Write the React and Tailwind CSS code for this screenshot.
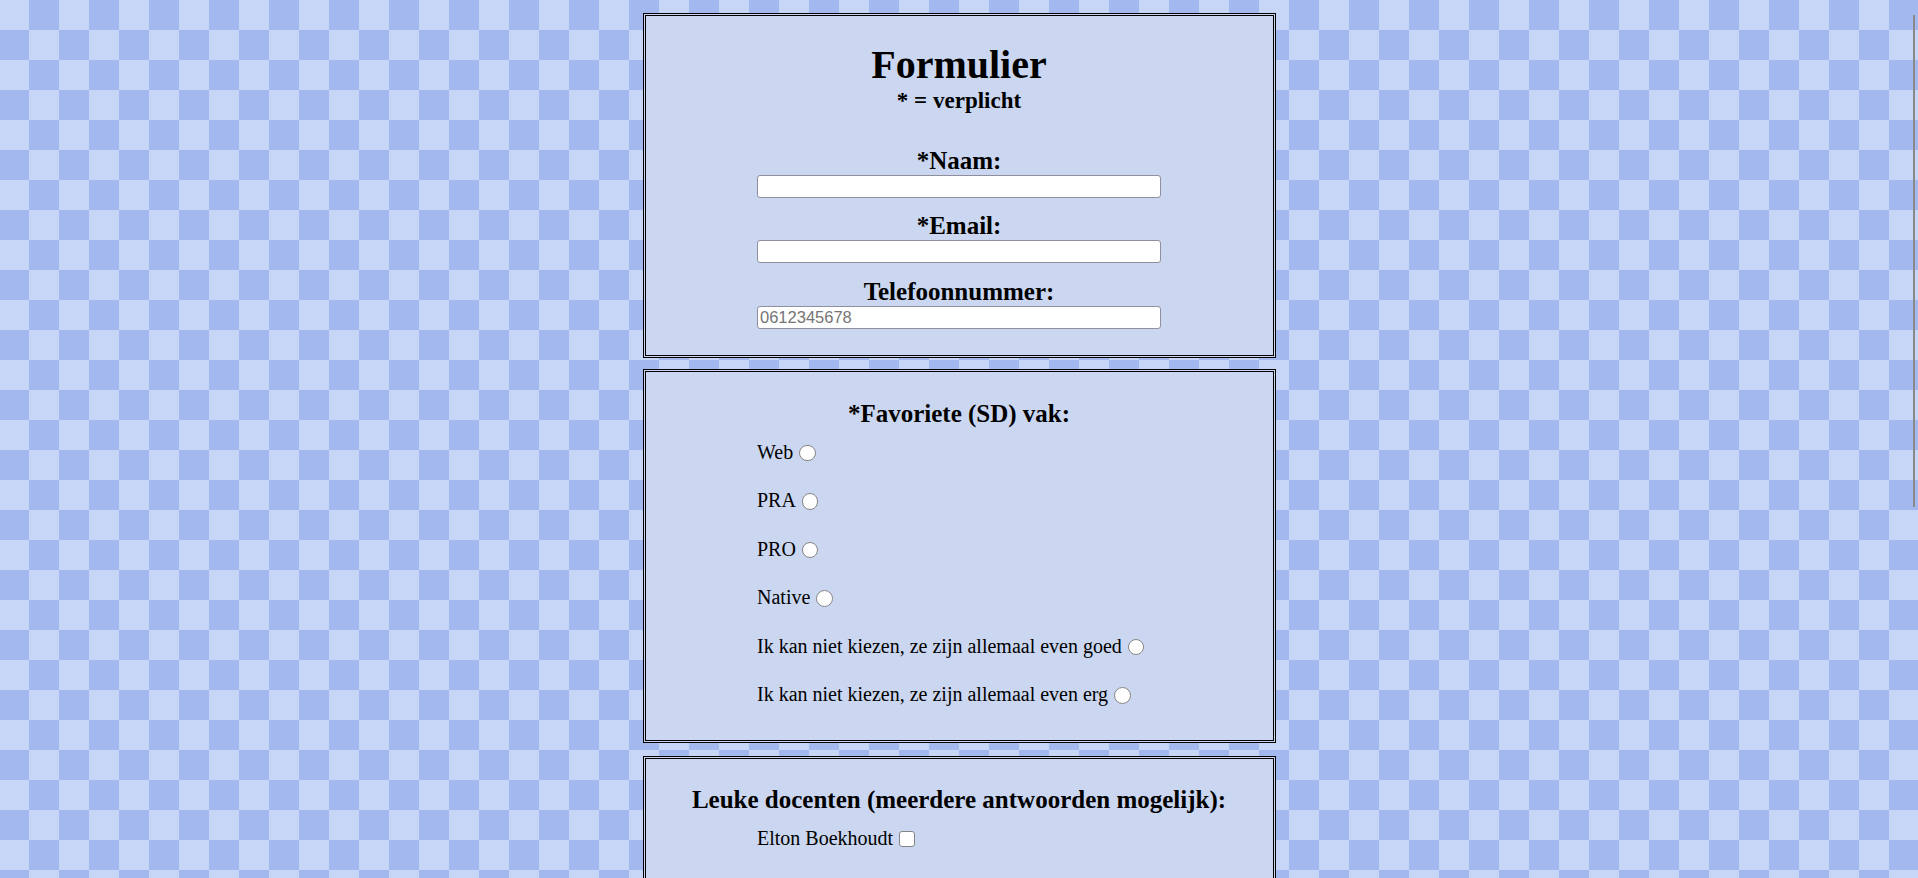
const vakken = [
  "Web",
  "PRA",
  "PRO",
  "Native",
  "Ik kan niet kiezen, ze zijn allemaal even goed",
  "Ik kan niet kiezen, ze zijn allemaal even erg",
];

const docenten = ["Elton Boekhoudt", "Marieke van der Veenendaal"];

function Field({ label, placeholder, className, inputClass }) {
  return (
    <>
      <label className={`text-[25px] font-bold leading-[29px] ${className}`}>
        {label}
      </label>
      <input
        type="text"
        placeholder={placeholder}
        className={`h-[23.5px] w-[404px] rounded-[3px] border border-[#8f8f9d] bg-white px-[2px] font-['Liberation_Sans',sans-serif] text-[16.5px] text-black outline-none placeholder:text-[#757575] ${inputClass}`}
      />
    </>
  );
}

export default function App() {
  return (
    <div className="relative h-screen overflow-hidden bg-[image:conic-gradient(#a2b8ef_25%,#c7d6f7_0_50%,#a2b8ef_0_75%,#c7d6f7_0)] bg-[length:60px_60px] bg-[position:-1px_0] pt-[13px] font-['Liberation_Serif',serif] text-black">
      {/* persoonsgegevens */}
      <div className="mx-auto flex w-[633px] flex-col items-center border-[3px] border-double border-black bg-[#cbd7f0] pt-[26px] pb-[25.5px]">
        <h1 className="text-[40px] font-bold leading-[45px]">Formulier</h1>
        <p className="mt-[1.2px] text-[23px] font-bold leading-[26px]">
          * = verplicht
        </p>
        <Field label="*Naam:" className="mt-[32.3px]" inputClass="-mt-[0.5px]" />
        <Field label="*Email:" className="mt-[12.9px]" inputClass="-mt-[0.4px]" />
        <Field
          label="Telefoonnummer:"
          placeholder="0612345678"
          className="mt-[13.5px]"
          inputClass="mt-0"
        />
      </div>

      {/* favoriete vak */}
      <div className="mx-auto mt-[11.5px] flex w-[633px] flex-col items-center border-[3px] border-double border-black bg-[#cbd7f0] pt-[26.5px] pb-[33.2px]">
        <h2 className="text-[25px] font-bold leading-[29px]">
          *Favoriete (SD) vak:
        </h2>
        <div className="mt-[12px] flex w-[404px] flex-col items-start gap-[24.5px]">
          {vakken.map((vak) => (
            <label
              key={vak}
              className="flex h-[24px] items-center text-[20px] leading-[24px]"
            >
              {vak}
              <input
                type="radio"
                name="vak"
                className="mt-[2px] ml-[6px] h-[16.5px] w-[16.5px] appearance-none rounded-full border-[1.5px] border-[#858585] bg-white"
              />
            </label>
          ))}
        </div>
      </div>

      {/* docenten */}
      <div className="mx-auto mt-[13.3px] flex w-[633px] flex-col items-center border-[3px] border-double border-black bg-[#cbd7f0] pt-[26.4px] pb-[34px]">
        <h2 className="text-[25px] font-bold leading-[29px]">
          Leuke docenten (meerdere antwoorden mogelijk):
        </h2>
        <div className="mt-[12px] flex w-[404px] flex-col items-start gap-[24.5px]">
          {docenten.map((naam) => (
            <label
              key={naam}
              className="flex h-[24px] items-center text-[20px] leading-[24px]"
            >
              {naam}
              <input
                type="checkbox"
                className="mt-[1px] ml-[6px] h-[16px] w-[16px] appearance-none rounded-[3px] border-[1.5px] border-[#858585] bg-white"
              />
            </label>
          ))}
        </div>
      </div>

      {/* overlay scrollbar */}
      <div className="absolute top-[15px] right-[3px] h-[492px] w-[2px] bg-[#8a8a8a]" />
    </div>
  );
}
